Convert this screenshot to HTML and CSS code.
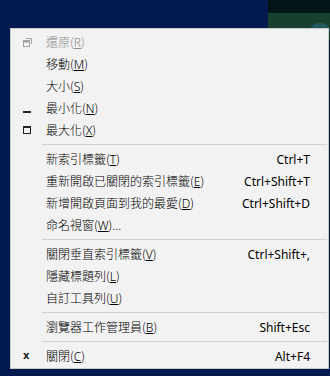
FILE: index.html
```html
<!DOCTYPE html>
<html lang="zh-Hant">
<head>
<meta charset="utf-8">
<link rel="stylesheet" href="styles.css">
</head>
<body>
<div class="desktop">
  <div class="bgwin"><div class="bgwin-top"></div><div class="bgwin-body"><span class="blob"></span></div></div>
  <div class="menu">
    <div class="item disabled"><span class="icon"><svg width="9" height="9" viewBox="0 0 9 9"><path d="M3 0.5h5.5v5.5" fill="none" stroke="#a0a0a0" stroke-width="1"/><rect x="0.5" y="2.5" width="6" height="6" fill="none" stroke="#a0a0a0" stroke-width="1"/><rect x="0.5" y="2.5" width="6" height="2" fill="#a0a0a0"/></svg></span><span class="label">還原(<u>R</u>)</span><span class="key"></span></div>
    <div class="item"><span class="icon"></span><span class="label">移動(<u>M</u>)</span><span class="key"></span></div>
    <div class="item"><span class="icon"></span><span class="label">大小(<u>S</u>)</span><span class="key"></span></div>
    <div class="item"><span class="icon"><svg width="9" height="9" viewBox="0 0 9 9"><rect x="0" y="7" width="8" height="2" fill="#222"/></svg></span><span class="label">最小化(<u>N</u>)</span><span class="key"></span></div>
    <div class="item"><span class="icon"><svg width="9" height="9" viewBox="0 0 9 9"><rect x="0.5" y="0.5" width="7" height="7" fill="none" stroke="#222" stroke-width="1"/><rect x="0" y="0" width="8" height="2" fill="#222"/></svg></span><span class="label">最大化(<u>X</u>)</span><span class="key"></span></div>
    <div class="sep"></div>
    <div class="item"><span class="icon"></span><span class="label">新索引標籤(<u>T</u>)</span><span class="key">Ctrl+T</span></div>
    <div class="item"><span class="icon"></span><span class="label">重新開啟已關閉的索引標籤(<u>E</u>)</span><span class="key">Ctrl+Shift+T</span></div>
    <div class="item"><span class="icon"></span><span class="label">新增開啟頁面到我的最愛(<u>D</u>)</span><span class="key">Ctrl+Shift+D</span></div>
    <div class="item"><span class="icon"></span><span class="label">命名視窗(<u>W</u>)...</span><span class="key"></span></div>
    <div class="sep"></div>
    <div class="item"><span class="icon"></span><span class="label">關閉垂直索引標籤(<u>V</u>)</span><span class="key">Ctrl+Shift+,</span></div>
    <div class="item"><span class="icon"></span><span class="label">隱藏標題列(<u>L</u>)</span><span class="key"></span></div>
    <div class="item"><span class="icon"></span><span class="label">自訂工具列(<u>U</u>)</span><span class="key"></span></div>
    <div class="sep"></div>
    <div class="item"><span class="icon"></span><span class="label">瀏覽器工作管理員(<u>B</u>)</span><span class="key">Shift+Esc</span></div>
    <div class="sep"></div>
    <div class="item"><span class="icon"><span class="xglyph">x</span></span><span class="label">關閉(<u>C</u>)</span><span class="key">Alt+F4</span></div>
  </div>
</div>
</body>
</html>
```
FILE: styles.css
```css
html, body {
  margin: 0;
  padding: 0;
}
body {
  background: #021a4f;
  width: 330px;
  height: 376px;
  overflow: hidden;
  font-family: "Segoe UI", "Noto Sans", "Noto Sans CJK TC", sans-serif;
  font-size: 12px;
  color: #000;
}
.desktop {
  position: relative;
  width: 330px;
  height: 376px;
  padding-top: 28px;
  box-sizing: border-box;
}
.bgwin {
  position: absolute;
  left: 268px;
  top: 0;
  width: 62px;
  height: 40px;
}
.bgwin-top {
  height: 13px;
  background: #021516;
}
.bgwin-body {
  height: 27px;
  background: #17412e;
  position: relative;
  overflow: hidden;
}
.blob {
  position: absolute;
  left: 42px;
  top: 10px;
  width: 20px;
  height: 14px;
  border-radius: 50%;
  background: #1f5a60;
}
.menu {
  position: relative;
  margin-left: 10px;
  width: 319px;
  box-sizing: border-box;
  background: #f2f2f2;
  border: 1px solid #c8c8c8;
  padding: 2px 0 1px 0;
}
.item {
  display: flex;
  align-items: center;
  height: 22px;
  white-space: nowrap;
}
.icon {
  width: 35px;
  padding-left: 12px;
  box-sizing: border-box;
  display: flex;
  align-items: center;
  height: 22px;
}
.icon svg {
  display: block;
}
.label {
  flex: 1;
  font-family: "Noto Sans CJK TC", sans-serif;
  font-weight: 300;
  letter-spacing: 0;
}
.label u {
  font-family: "Segoe UI", "Noto Sans", sans-serif;
  text-underline-offset: 1px;
}
.key {
  padding-right: 18px;
  font-family: "Segoe UI", "Noto Sans", sans-serif;
}
.disabled .label {
  color: #8a8a8a;
}
.sep {
  height: 1px;
  background: #d0d0d0;
  margin: 3px 1px 3px 31px;
}
.xglyph {
  font-family: "DejaVu Sans", sans-serif;
  font-weight: bold;
  font-size: 10px;
  line-height: 10px;
  color: #222;
  margin-left: 0;
}
```
